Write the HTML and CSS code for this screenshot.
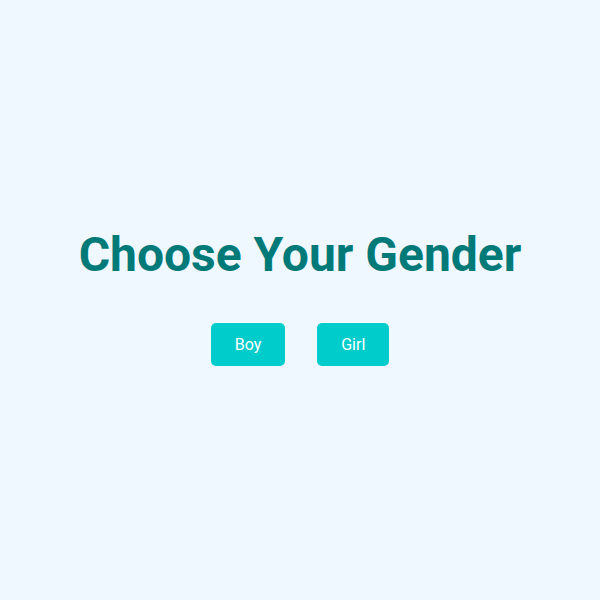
FILE: index.html
```html
<!DOCTYPE html>
<html>
<head>
<meta charset="utf-8">
<link rel="stylesheet" href="styles.css">
</head>
<body>
<main class="page">
  <h1 class="title">Choose Your Gender</h1>
  <div class="choices">
    <button class="btn">Boy</button>
    <button class="btn">Girl</button>
  </div>
</main>
</body>
</html>
```
FILE: styles.css
```css
html, body {
  margin: 0;
  padding: 0;
  background: #f0f8ff;
  font-family: Roboto, "Liberation Sans", sans-serif;
}
.page {
  box-sizing: border-box;
  height: 600px;
  padding-bottom: 8px;
  display: flex;
  flex-direction: column;
  align-items: center;
  justify-content: center;
}
.title {
  margin: 0 0 40px;
  font-size: 48px;
  font-weight: 700;
  color: #007a78;
  line-height: 1.2;
}
.choices {
  display: flex;
  gap: 32px;
}
.btn {
  font-family: Roboto, "Liberation Sans", sans-serif;
  font-size: 16px;
  color: #fff;
  background: #00cccc;
  border: none;
  border-radius: 5px;
  padding: 12px 24px;
  line-height: 19px;
}
```
